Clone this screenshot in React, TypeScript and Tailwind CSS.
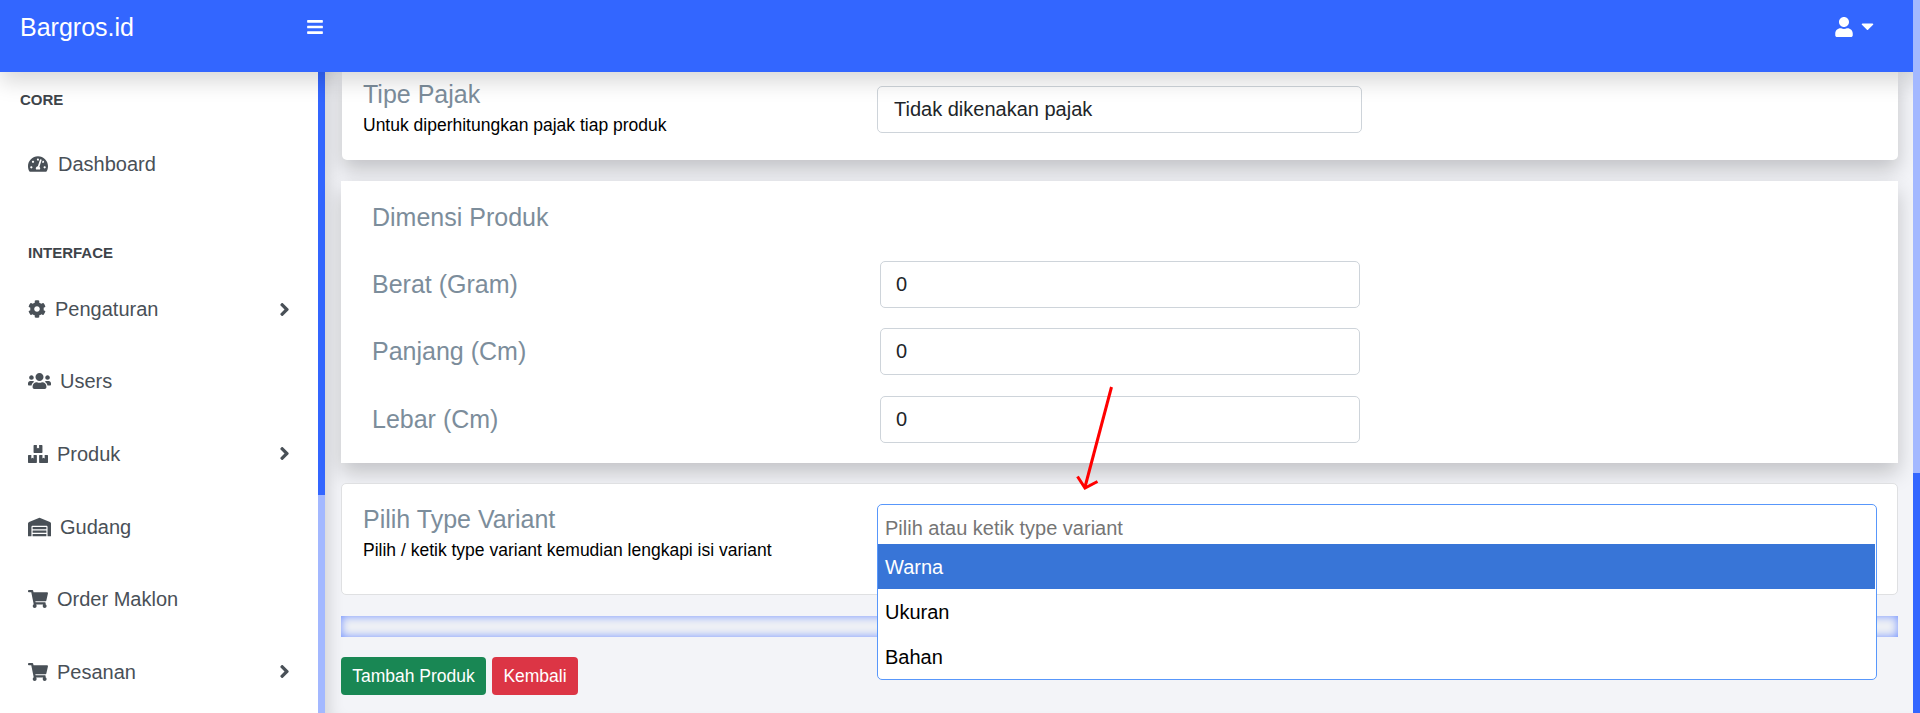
import { FaAngleRight, FaBars, FaBoxes, FaCaretDown, FaCog, FaShoppingCart, FaTachometerAlt, FaUser, FaUsers, FaWarehouse } from "react-icons/fa";
import type { ReactNode } from "react";

const menu: { icon: ReactNode; label: string; arrow?: boolean; h: string }[] = [
    { icon: <FaCog className="w-[18px] h-[20px]" />, label: "Pengaturan", arrow: true, h: "h-[72px]" },
    { icon: <FaUsers className="w-[23px] h-[20px]" />, label: "Users", h: "h-[72px]" },
    { icon: <FaBoxes className="w-[20px] h-[20px]" />, label: "Produk", arrow: true, h: "h-[73px]" },
    { icon: <FaWarehouse className="w-[23px] h-[20px]" />, label: "Gudang", h: "h-[73px]" },
    { icon: <FaShoppingCart className="w-[20px] h-[20px]" />, label: "Order Maklon", h: "h-[72px]" },
    { icon: <FaShoppingCart className="w-[20px] h-[20px]" />, label: "Pesanan", arrow: true, h: "h-[73px]" },
];

function Sidebar() {
    return (
        <aside className="w-[318px] shrink-0 bg-white text-[#495057] overflow-hidden">
            <div className="pl-[20px] pt-[18px] text-[15px] leading-[20px] font-bold text-[#3e444a]">CORE</div>
            <div className="flex items-center gap-[10px] pl-[28px] h-[72px] mt-[18px] text-[20px]">
                <FaTachometerAlt className="w-[20px] h-[20px]" />
                <span>Dashboard</span>
            </div>
            <div className="pl-[28px] mt-[43px] text-[15px] leading-[20px] font-bold text-[#3e444a]">INTERFACE</div>
            <div className="mt-[10px]">
                {menu.map((item) => (
                    <div key={item.label} className={`flex items-center gap-[9px] pl-[28px] pr-[28px] text-[20px] ${item.h}`}>
                        {item.icon}
                        <span className="flex-1">{item.label}</span>
                        {item.arrow && <FaAngleRight className="w-[11px] h-[21px]" />}
                    </div>
                ))}
            </div>
        </aside>
    );
}

function Input({ value, className }: { value: string; className: string }) {
    return (
        <div className={`h-[47px] bg-white border border-[#ced4da] rounded-[5px] flex items-center pb-[2px] text-[20px] text-[#212529] ${className}`}>
            {value}
        </div>
    );
}

function DimensionRow({ label, mt }: { label: string; mt: string }) {
    return (
        <div className={`flex items-center ${mt}`}>
            <div className="w-[508px] text-[25px] text-[#7c8d9b]">{label}</div>
            <Input value="0" className="w-[480px] px-[15px]" />
        </div>
    );
}

export default function App() {
    return (
        <div className="relative h-[713px] overflow-hidden bg-[#f3f4f8] font-['Liberation_Sans',Arial,sans-serif]">
            <header className="relative z-20 h-[72px] bg-[#3366ff] text-white flex shadow-[0_10px_20px_rgba(0,0,0,0.15)]">
                <div className="pl-[20px] pt-[11px] w-[307px] text-[25px] leading-[32px]">Bargros.id</div>
                <FaBars className="w-[16px] h-[18px] mt-[18px]" />
                <div className="ml-auto flex pt-[17px] pr-[46px] gap-[8px]">
                    <FaUser className="w-[18px] h-[20px]" />
                    <FaCaretDown className="w-[13px] h-[20px] -mt-[1px]" />
                </div>
            </header>

            <div className="flex h-[641px]">
                <Sidebar />
                {/* scrollbar of the sidebar */}
                <div className="w-[7px] shrink-0 bg-[#a3b8ff]">
                    <div className="h-[423px] bg-[#3366ff]" />
                </div>

                <main className="flex-1 min-w-0 pl-[16px] pr-[22px] shadow-[inset_16px_0_16px_-12px_rgba(0,0,0,0.14)]">
                    <section className="ml-[1px] h-[88px] bg-white rounded-b-[5px] flex pl-[21px] shadow-[0_10px_20px_rgba(0,0,0,0.2)]">
                        <div className="w-[514px]">
                            <div className="mt-[7px] text-[25px] leading-[30px] text-[#7c8d9b]">Tipe Pajak</div>
                            <div className="mt-[4px] text-[17.5px] leading-[24px] text-black">Untuk diperhitungkan pajak tiap produk</div>
                        </div>
                        <Input value="Tidak dikenakan pajak" className="w-[485px] mt-[14px] px-[16px]" />
                    </section>

                    <section className="mt-[21px] h-[282px] bg-white pl-[31px] pt-[18px] shadow-[0_10px_20px_rgba(0,0,0,0.2)]">
                        <div className="text-[25px] leading-[36px] text-[#7c8d9b]">Dimensi Produk</div>
                        <DimensionRow label="Berat (Gram)" mt="mt-[26px]" />
                        <DimensionRow label="Panjang (Cm)" mt="mt-[20px]" />
                        <DimensionRow label="Lebar (Cm)" mt="mt-[21px]" />
                    </section>

                    <section className="mt-[20px] h-[112px] bg-white border border-[#dfe0e2] rounded-[5px] flex pl-[21px]">
                        <div className="w-[514px]">
                            <div className="mt-[20px] text-[25px] leading-[30px] text-[#7c8d9b]">Pilih Type Variant</div>
                            <div className="mt-[4px] text-[17.5px] leading-[24px] text-black">Pilih / ketik type variant kemudian lengkapi isi variant</div>
                        </div>
                        <div className="relative flex-1">
                            <div className="absolute z-10 left-0 top-[20px] w-[1000px] h-[176px] bg-white border border-[#5897fb] rounded-[5px] text-[20px]">
                                <div className="h-[39px] pl-[7px] pt-[9px] leading-[28px] text-[#757575]">Pilih atau ketik type variant</div>
                                <div className="h-[45px] pl-[7px] flex items-center bg-[#3875d7] text-white mr-[1px]">Warna</div>
                                <div className="h-[45px] pl-[7px] flex items-center text-black">Ukuran</div>
                                <div className="h-[45px] pl-[7px] flex items-center text-black">Bahan</div>
                            </div>
                        </div>
                    </section>

                    <div className="mt-[21px] h-[21px] bg-[#eff1f5] shadow-[inset_0_0_10px_#6f8fff]" />

                    <div className="mt-[20px] flex gap-[6px] text-[17.5px] text-white">
                        <button className="h-[38px] w-[145px] rounded-[4px] bg-[#198754]">Tambah Produk</button>
                        <button className="h-[38px] w-[86px] rounded-[4px] bg-[#dc3545]">Kembali</button>
                    </div>
                </main>
            </div>

            {/* scrollbar of the page, above the header */}
            <div className="absolute z-30 right-0 top-0 bottom-0 w-[7px] bg-[#3366ff]">
                <div className="h-[473px] bg-[#a3b8ff]" />
            </div>

            <svg className="absolute z-30 left-[1070px] top-[380px] w-[50px] h-[115px] text-[#ff0000]" viewBox="1070 380 50 115" fill="none" stroke="currentColor" strokeWidth="3">
                <path d="M1111.5 387 L1085 487" />
                <path d="M1077.5 476.5 L1085 488 L1097.5 481.5" />
            </svg>
        </div>
    );
}
